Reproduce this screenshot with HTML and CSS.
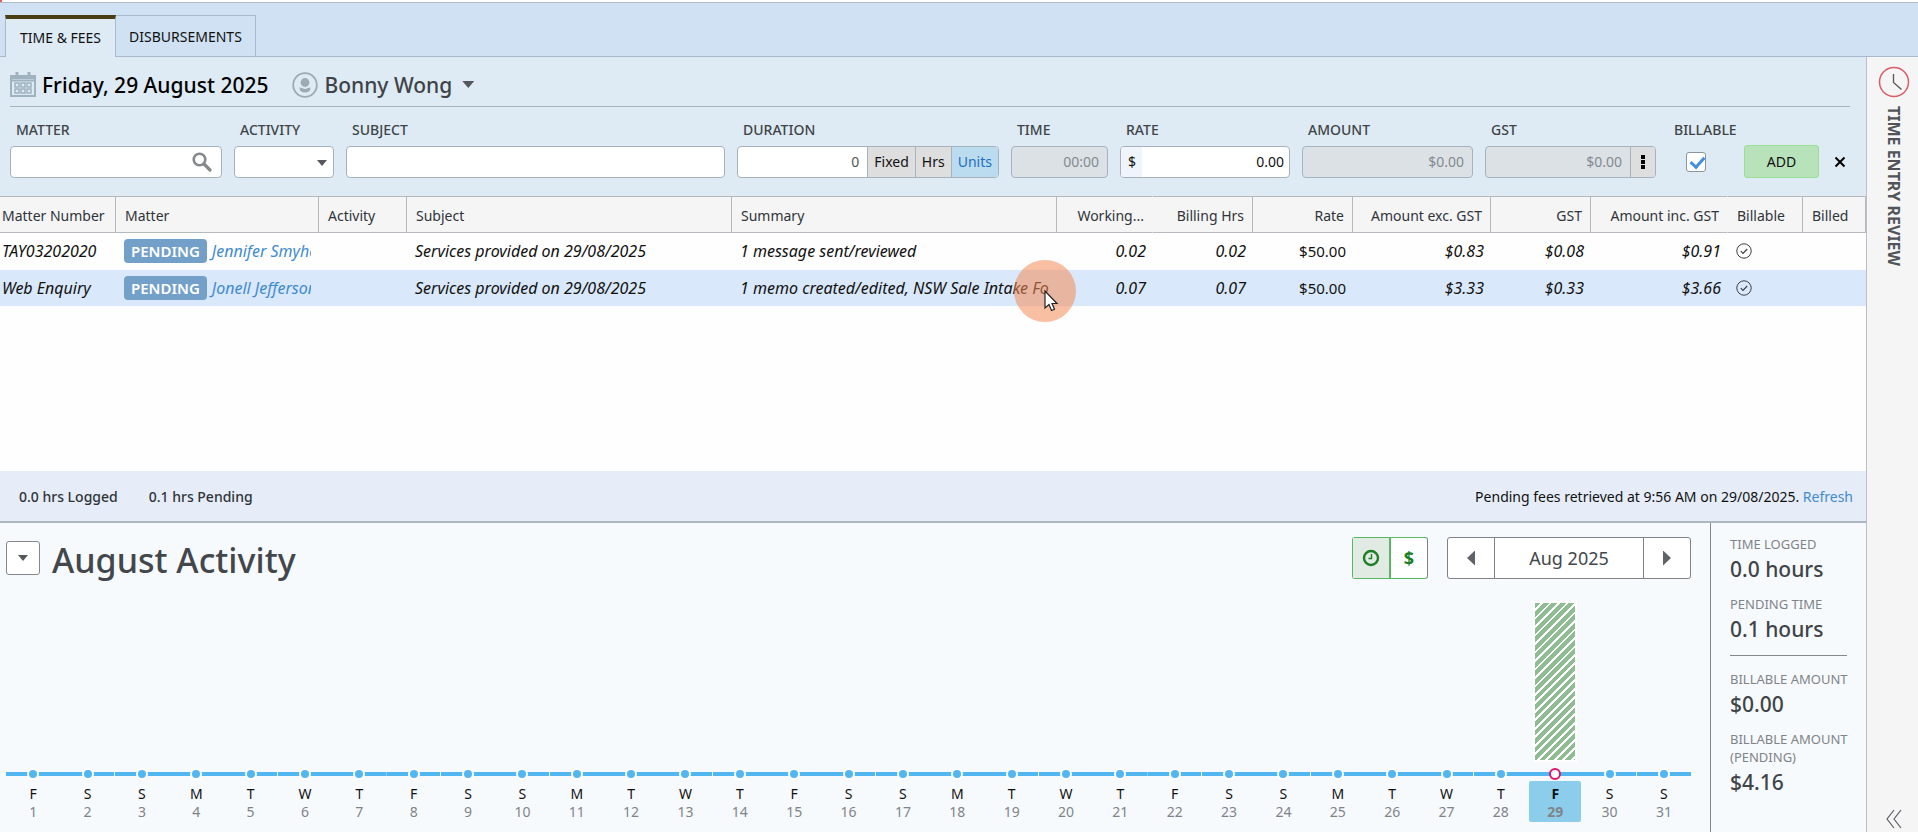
FILE: index.html
```html
<!DOCTYPE html>
<html lang="en">
<head>
<meta charset="utf-8">
<title>Time &amp; Fees</title>
<link rel="stylesheet" href="styles.css">
</head>
<body>
<div class="app">
  <nav class="tabs">
    <a class="tab tab-active" href="#time">TIME &amp; FEES</a>
    <a class="tab" href="#disbursements">DISBURSEMENTS</a>
  </nav>
  <div class="workspace">
    <main class="main">
      <section class="entry">
        <div class="entry-head">
          <svg class="icon-cal" viewBox="0 0 26 25" width="26" height="25" aria-hidden="true">
            <path fill="none" stroke="#9fb2bf" stroke-width="2" d="M1 4h24v20H1zM1 8.5h24"/>
            <path fill="none" stroke="#9fb2bf" stroke-width="3" d="M1 5.5h24M7 0v4M19 0v4"/>
            <path fill="none" stroke="#9fb2bf" stroke-width="1.5" d="M5 11h4v4H5zM11 11h4v4h-4zM17 11h4v4h-4zM5 17h4v4H5zM11 17h4v4h-4zM17 17h4v4h-4z"/>
          </svg>
          <h1 class="date">Friday, 29 August 2025</h1>
          <button class="user" type="button">
            <svg viewBox="0 0 26 26" width="26" height="26" aria-hidden="true">
              <circle cx="13" cy="13" r="11.8" fill="none" stroke="#9fa9b1" stroke-width="1.8"/>
              <circle cx="13" cy="10.500" r="4.400" fill="#9fa9b1"/>
              <path fill="#9fa9b1" d="M7.500 15.500q2 0 3 .8 2.500 1.400 5 0 1-.8 3-.8 0 5-5.500 5t-5.500-5z"/>
            </svg>
            <span>Bonny Wong</span>
            <i class="caret caret-lg"></i>
          </button>
        </div>
        <form class="form">
          <div class="field">
            <label for="matter">MATTER</label>
            <div class="box">
              <input id="matter" type="text">
              <svg class="icon-search" viewBox="0 0 20 20" width="20" height="20" aria-hidden="true">
                <circle cx="7.500" cy="7.500" r="5.800" fill="none" stroke="#85898d" stroke-width="2.600"/>
                <path d="M12 12l6 6" stroke="#85898d" stroke-width="3.200" stroke-linecap="round"/>
              </svg>
            </div>
          </div>
          <div class="field">
            <label for="activity">ACTIVITY</label>
            <div class="box"><select id="activity"><option></option></select><i class="caret caret-in"></i></div>
          </div>
          <div class="field">
            <label for="subject">SUBJECT</label>
            <div class="box"><input id="subject" type="text"></div>
          </div>
          <div class="field">
            <label for="duration">DURATION</label>
            <div class="box">
              <input id="duration" class="num muted" type="text" value="0">
              <button class="seg" type="button">Fixed</button>
              <button class="seg" type="button">Hrs</button>
              <button class="seg seg-on" type="button">Units</button>
            </div>
          </div>
          <div class="field">
            <label for="time">TIME</label>
            <div class="box box-off"><input id="time" class="num" type="text" value="00:00" disabled></div>
          </div>
          <div class="field">
            <label for="rate">RATE</label>
            <div class="box"><span class="prefix">$</span><input id="rate" class="num rate" type="text" value="0.00"></div>
          </div>
          <div class="field">
            <label for="amount">AMOUNT</label>
            <div class="box box-off"><input id="amount" class="num" type="text" value="$0.00" disabled></div>
          </div>
          <div class="field">
            <label for="gst">GST</label>
            <div class="box box-off"><input id="gst" class="num" type="text" value="$0.00" disabled>
              <button class="seg dots" type="button" aria-label="GST options"><svg viewBox="0 0 4 16" width="4" height="16"><path d="M0 1h4v4H0zM0 6h4v4H0zM0 11h4v4H0z"/></svg></button></div>
          </div>
          <div class="field">
            <label for="billable">BILLABLE</label>
            <div class="check-slot"><input id="billable" class="check" type="checkbox" checked></div>
          </div>
          <button class="add" type="submit">ADD</button>
          <button class="close" type="button" aria-label="Clear"><svg viewBox="0 0 12 12" width="12" height="12"><path d="M1.500 1.500l9 9M10.500 1.500l-9 9" stroke="#000" stroke-width="2"/></svg></button>
        </form>
      </section>

      <section class="grid-area">
        <table class="grid">
          <colgroup>
            <col class="w-number"><col class="w-matter"><col class="w-activity"><col><col>
            <col class="w-working"><col class="w-rate"><col class="w-rate"><col class="w-exc"><col class="w-rate">
            <col class="w-inc"><col class="w-billable"><col class="w-billed">
          </colgroup>
          <thead>
            <tr>
              <th class="first">Matter Number</th><th>Matter</th><th>Activity</th><th>Subject</th><th>Summary</th>
              <th class="r open">Working...</th><th class="r">Billing Hrs</th><th class="r">Rate</th><th class="r">Amount exc. GST</th><th class="r">GST</th>
              <th class="r open">Amount inc. GST</th><th>Billable</th><th>Billed</th>
            </tr>
          </thead>
          <tbody>
            <tr>
              <td class="first">TAY03202020</td>
              <td><div class="clip"><span class="badge">PENDING</span><a href="#m1">Jennifer Smyhe</a></div></td>
              <td></td><td>Services provided on 29/08/2025</td><td><div class="clip">1 message sent/reviewed</div></td>
              <td class="r">0.02</td><td class="r">0.02</td><td class="r plain">$50.00</td><td class="r">$0.83</td><td class="r">$0.08</td><td class="r">$0.91</td>
              <td class="tick"><svg viewBox="0 0 16 16" width="16" height="16"><circle cx="8" cy="8" r="7.200" fill="none" stroke="#3c4044"/><path d="M4.800 8.200l2.200 2.200 4.200-4.400" fill="none" stroke="#3c4044" stroke-width="1.200"/></svg></td><td></td>
            </tr>
            <tr class="selected">
              <td class="first">Web Enquiry</td>
              <td><div class="clip"><span class="badge">PENDING</span><a href="#m2">Jonell Jefferson</a></div></td>
              <td></td><td>Services provided on 29/08/2025</td><td><div class="clip">1 memo created/edited, NSW Sale Intake Fo</div></td>
              <td class="r">0.07</td><td class="r">0.07</td><td class="r plain">$50.00</td><td class="r">$3.33</td><td class="r">$0.33</td><td class="r">$3.66</td>
              <td class="tick"><svg viewBox="0 0 16 16" width="16" height="16"><circle cx="8" cy="8" r="7.200" fill="none" stroke="#3c4044"/><path d="M4.800 8.200l2.200 2.200 4.200-4.400" fill="none" stroke="#3c4044" stroke-width="1.200"/></svg></td><td></td>
            </tr>
          </tbody>
        </table>
      </section>

      <section class="summary">
        <strong>0.0 hrs Logged</strong>
        <strong>0.1 hrs Pending</strong>
        <span class="retrieved">Pending fees retrieved at 9:56 AM on 29/08/2025. <a href="#refresh">Refresh</a></span>
      </section>

      <section class="activity">
        <div class="chart">
          <div class="chart-head">
            <button class="collapse" type="button" aria-label="Collapse"><i class="caret"></i></button>
            <h2>August Activity</h2>
            <div class="toggle">
              <button class="toggle-on" type="button" aria-label="Hours"><svg viewBox="0 0 18 18" width="18" height="18"><circle cx="9" cy="9" r="7" fill="none" stroke="#1c7f25" stroke-width="2.400"/><path d="M9.500 5v4.500H6.500" fill="none" stroke="#1c7f25" stroke-width="1.400"/></svg></button>
              <button type="button">$</button>
            </div>
            <div class="month">
              <button type="button" aria-label="Previous month"><i class="arrow arrow-l"></i></button>
              <button class="month-name" type="button">Aug 2025</button>
              <button type="button" aria-label="Next month"><i class="arrow arrow-r"></i></button>
            </div>
          </div>
          <div class="days" id="days"></div>
        </div>
        <aside class="stats">
          <dl>
            <dt>TIME LOGGED</dt><dd>0.0 hours</dd>
            <dt>PENDING TIME</dt><dd>0.1 hours</dd>
          </dl>
          <hr>
          <dl>
            <dt>BILLABLE AMOUNT</dt><dd>$0.00</dd>
            <dt>BILLABLE AMOUNT (PENDING)</dt><dd>$4.16</dd>
          </dl>
        </aside>
      </section>
    </main>
    <aside class="rail">
      <svg viewBox="0 0 32 32" width="32" height="32" aria-hidden="true"><circle cx="16" cy="16" r="14.500" fill="none" stroke="#d95c66" stroke-width="1.500"/><path d="M15.500 8v8.500l8 7" fill="none" stroke="#5f5358" stroke-width="1.300"/></svg>
      <span class="rail-label">TIME ENTRY REVIEW</span>
      <button class="expand" type="button" aria-label="Expand"><svg viewBox="0 0 18 20" width="18" height="20"><path d="M9 1l-7 9 7 9M16 1l-7 9 7 9" fill="none" stroke="#5a5e62" stroke-width="1.200"/></svg></button>
    </aside>
  </div>
  <svg class="pointer" viewBox="0 0 64 64" width="64" height="64" aria-hidden="true">
    <circle cx="32" cy="32" r="31" fill="#f48a55" fill-opacity=".55"/>
    <path d="M32 32v17l4-3.500 2.500 6 3-1.300-2.500-5.700h5z" fill="#fff" stroke="#222" stroke-width="1.200"/>
  </svg>
</div>
<script src="days.js"></script>
</body>
</html>
```
FILE: days.js
```js
const letters = "FSSMTWT";
const pending = { 29: 157 };
const selected = 29;
const seams = [2, 5, 8, 10, 13, 16, 19, 22, 24, 27, 30];
let html = "";
for (let d = 1; d <= 31; d++) {
  const bar = pending[d] ? `<div class="bar" style="height:${pending[d]}px"></div>` : "";
  const cls = (d === selected ? " day-on" : "") + (seams.includes(d) ? " seam" : "");
  html += `<div class="day${cls}"><div class="slot">${bar}</div>` +
    `<div class="track"><i class="dot"></i></div>` +
    `<button class="day-label" type="button"><span>${letters[(d - 1) % 7]}</span><small>${d}</small></button></div>`;
}
document.getElementById("days").innerHTML = html;
```
FILE: styles.css
```css
* { box-sizing: border-box; }
body { margin: 0; font: 14px/20px "Noto Sans", "Open Sans", sans-serif; color: #111; background: #fff; }
button, input, select { font: inherit; color: inherit; margin: 0; padding: 0; border: 0; background: none; border-radius: 0; min-width: 0; outline: 0; }
button { cursor: pointer; }
svg { display: block; flex: none; }
a { color: #3f8bd0; text-decoration: none; }
h1, h2, dl, dd { margin: 0; }

.app { display: flex; flex-direction: column; min-height: 100vh; padding-top: 2px; }
.app::before { content: ""; position: absolute; left: 0; top: 0; width: 2px; height: 2px; background: #f0566a; }
.tabs { display: flex; align-items: stretch; height: 55px; padding: 12px 5px 0; background: #cfe1f2; border-top: 1px solid #b4bcc9; box-shadow: inset 0 -1px #a9b9cd; }
.tab { display: flex; align-items: center; padding: 2px 13px 0; color: #111; border: 1px solid #a9b9cd; border-left: 0; }
.tab-active { padding: 0 14px; background: #deebf5; border-left: 1px solid #a9b9cd; border-top: 4px solid #4b3d14; border-bottom: 0; }

.workspace { display: flex; flex: 1; }
.main { flex: 1; min-width: 0; display: flex; flex-direction: column; }

.entry { background: #deebf4; }
.entry-head { display: flex; align-items: center; height: 50px; margin: 0 16px 0 10px; padding-top: 6px; border-bottom: 1px solid #a9b3be; }
.date { margin-left: 6px; font-size: 21px; line-height: 28px; font-weight: 500; color: #000; }
.user { display: flex; align-items: center; gap: 6px; margin-left: 24px; font-size: 21px; line-height: 28px; font-weight: 500; color: #3f4347; }
.caret { display: block; width: 10px; height: 6px; background: #55595d; clip-path: polygon(0 0, 100% 0, 50% 100%); }
.caret-lg { width: 12px; height: 7px; margin-left: 4px; }

.form { display: grid; grid-template-columns: 212px 100px 1fr 262px 97px 170px 171px 171px 64px 75px 18px; gap: 12px; align-items: end; padding: 13px 17px 18px 10px; }
.field { display: flex; flex-direction: column; gap: 6px; min-width: 0; }
.field label { padding-left: 6px; color: #404448; font-weight: 500; white-space: nowrap; }
.box { display: flex; align-items: stretch; position: relative; height: 32px; background: #fff; border: 1px solid #a6b2be; border-radius: 4px; overflow: hidden; }
.box input, .box select { flex: 1; width: 100%; padding: 0 8px; }
.box select { appearance: none; }
.box .num { text-align: right; padding-right: 8px; }
.box .rate { padding-right: 5px; }
.muted { color: #555; }
.box-off { background: #dce1e6; color: #848a90; }
.box input:disabled { color: #848a90; }
.icon-search { align-self: center; margin-right: 9px; }
.caret-in { position: absolute; right: 6px; top: 13px; }
.prefix { display: flex; align-items: center; width: 21px; padding-left: 7px; background: #eff5fa; }
.seg { padding: 0 6px; background: #dedede; border-left: 1px solid #a6b2be; color: #111; }
.seg-on { background: #badcee; color: #1d6fc4; }
.dots { display: flex; align-items: center; justify-content: center; width: 25px; }
.check-slot { display: flex; align-items: center; height: 32px; padding-left: 18px; }
.check { appearance: none; width: 20px; height: 20px; background: #fff; border: 1px solid #8a949e; border-radius: 3px; position: relative; }
.check:checked::after { content: ""; position: absolute; left: 6px; top: 1px; width: 6px; height: 11px; border: solid #4590da; border-width: 0 3px 3px 0; transform: rotate(42deg); }
.add { height: 33px; background: #b8e2b9; border: 1px solid #9ade98; border-radius: 3px; color: #111; }
.close { display: flex; align-items: center; justify-content: center; height: 32px; }

.grid-area { flex: 1; background: #fefefe; }
.grid { width: 100%; table-layout: fixed; border-collapse: separate; border-spacing: 0; }
.w-number { width: 116px; }
.w-matter { width: 203px; }
.w-activity { width: 88px; }
.w-working { width: 96px; }
.w-rate { width: 100px; }
.w-exc { width: 138px; }
.w-inc { width: 137px; }
.w-billable { width: 75px; }
.w-billed { width: 63px; }
.grid th { height: 37px; padding: 2px 8px 0 9px; text-align: left; font-weight: 400; color: #303438; white-space: nowrap; background: #f5f5f6; border: solid #b6babf; border-width: 1px 1px 1px 0; }
.grid th.open { border-right-color: #f5f5f6; }
.grid td { height: 37px; padding: 0 8px; font-size: 16px; font-style: italic; color: #111; white-space: nowrap; border-bottom: 1px solid #fafbfc; }
.grid .first { padding-left: 2px; padding-right: 0; }
.grid .r { text-align: right; }
.grid td.r { padding-right: 7px; }
.grid td.plain { font-size: 15px; font-style: normal; }
.selected td { background: #d9e8fb; }
.clip { display: flex; align-items: center; overflow: hidden; }
.badge { flex: none; margin-right: 5px; padding: 0 7px; height: 24px; font-size: 15px; line-height: 24px; border-radius: 4px; background: #73a0c9; color: #fff; font-weight: 600; font-style: normal; }

.summary { display: flex; align-items: center; gap: 31px; height: 52px; padding: 1px 13px 0 19px; background: #e6edf9; border-bottom: 2px solid #adb7c2; color: #303438; }
.summary strong { font-weight: 500; }
.retrieved { margin-left: auto; color: #111; }

.activity { display: flex; background: #f7fafd; }
.chart { flex: 1; min-width: 0; padding: 14px 19px 10px 6px; }
.chart-head { display: flex; align-items: center; height: 42px; }
.collapse { display: flex; align-items: center; justify-content: center; width: 34px; height: 34px; background: #fff; border: 1px solid #83888e; border-radius: 3px; }
.chart-head h2 { flex: 1; margin-left: 12px; padding-top: 4px; font-size: 34px; line-height: 38px; font-weight: 500; color: #43474c; }
.toggle { display: flex; width: 76px; height: 42px; background: #fff; border: 1px solid #58b763; border-right-color: #7e8389; border-radius: 3px; }
.toggle button { flex: 1; display: flex; align-items: center; justify-content: center; color: #1c7f25; font-size: 18px; font-weight: 700; }
.toggle .toggle-on { background: #e2ebe3; border-right: 2px solid #58b763; }
.month { display: flex; width: 244px; height: 42px; margin-left: 19px; background: #fff; border: 1px solid #7e8389; border-radius: 3px; }
.month button { width: 46px; display: flex; align-items: center; justify-content: center; color: #43474c; }
.month .month-name { flex: 1; font-size: 18px; border: solid #7e8389; border-width: 0 1px; }
.arrow { width: 8px; height: 15px; background: #606468; }
.arrow-l { clip-path: polygon(100% 0, 100% 100%, 0 50%); }
.arrow-r { clip-path: polygon(0 0, 100% 50%, 0 100%); }

.days { display: flex; }
.day { flex: 1; display: flex; flex-direction: column; align-items: center; }
.slot { display: flex; align-items: flex-end; height: 181px; margin-bottom: 6px; }
.bar { width: 40px; outline: 2px solid #fff; background: repeating-linear-gradient(135deg, #8fbc93 0 4px, #fff 4px 6px); }
.track { display: flex; align-items: center; justify-content: center; align-self: stretch; height: 15px; background: linear-gradient(#52b7f0, #52b7f0) center / 100% 4px no-repeat; }
.seam .track { background-size: calc(100% - 1px) 4px; background-position: left center; }
.dot { width: 12px; height: 12px; border: 2px solid #fff; border-radius: 50%; background: #52b7f0; }
.day-on .dot { border-color: #e0146a; background: #fff; }
.day-label { display: flex; flex-direction: column; align-items: center; width: 52px; height: 41px; padding-top: 4px; line-height: 18px; border-radius: 2px; }
.day-label small { font-size: 14px; color: #7f8489; }
.day-on .day-label { background: #8ccdec; font-weight: 700; }

.stats { width: 156px; padding: 12px 16px 0 19px; border-left: 1px solid #83888e; }
.stats dt { font-size: 13px; line-height: 18px; color: #7f8489; }
.stats dd { margin: 2px 0 12px; font-size: 21px; line-height: 28px; font-weight: 500; color: #404448; }
.stats hr { margin: 0 3px 14px 0; border: 0; border-top: 1px solid #83888e; }

.rail { display: flex; flex-direction: column; align-items: center; width: 52px; padding: 9px 0 3px 3px; background: #f5f5f6; border-left: 1px solid #bcc0c5; }
.rail-label { writing-mode: vertical-rl; margin-top: 8px; font-weight: 700; font-size: 16px; color: #505458; }
.expand { margin-top: auto; }

.pointer { position: absolute; left: 1013px; top: 259px; pointer-events: none; }
```
